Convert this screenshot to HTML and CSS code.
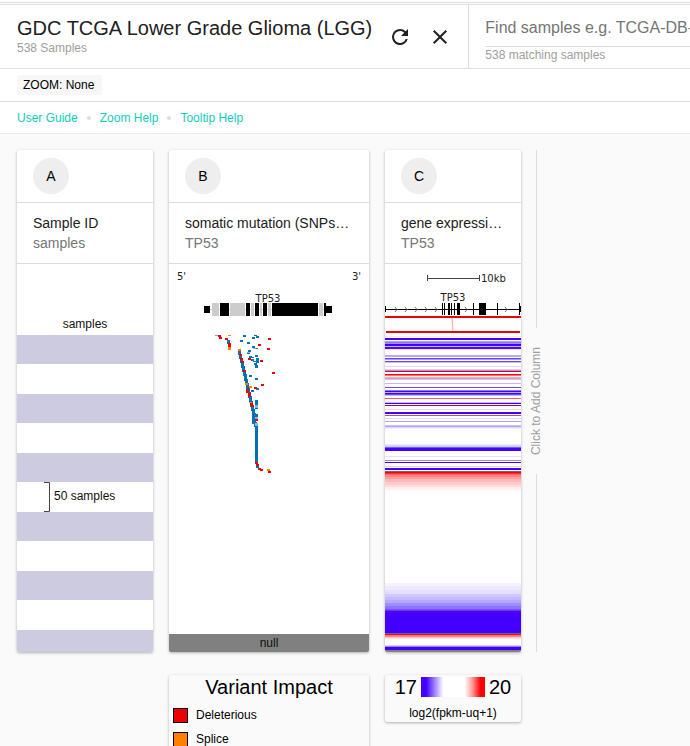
FILE: index.html
```html
<!DOCTYPE html>
<html lang="en">
<head>
<meta charset="utf-8">
<title>GDC TCGA Lower Grade Glioma (LGG)</title>
<link rel="stylesheet" href="styles.css">
</head>
<body>
<div class="topline"></div>
<header class="appbar">
  <div class="cohort">
    <div>
      <h1 class="cohort-name">GDC TCGA Lower Grade Glioma (LGG)</h1>
      <p class="note">538 Samples</p>
    </div>
    <div class="actions">
      <button class="icon-button" aria-label="Reload"><svg viewBox="0 0 24 24"><path d="M17.65 6.35A7.96 7.96 0 0 0 12 4a8 8 0 1 0 7.73 10h-2.08A6 6 0 1 1 12 6c1.66 0 3.14.69 4.22 1.78L13 11h7V4z"/></svg></button>
      <button class="icon-button" aria-label="Close"><svg viewBox="0 0 24 24"><path d="M19 6.41 17.59 5 12 10.59 6.41 5 5 6.41 10.59 12 5 17.59 6.41 19 12 13.41 17.59 19 19 17.59 13.41 12z"/></svg></button>
    </div>
  </div>
  <div class="search">
    <input class="search-box" type="text" aria-label="Find samples" placeholder="Find samples e.g. TCGA-DB-A4XH">
    <p class="note">538 matching samples</p>
  </div>
</header>
<div class="zoombar"><span class="chip">ZOOM: None</span></div>
<nav class="links">
  <a href="#guide">User Guide</a><i class="dot"></i><a href="#zoom">Zoom Help</a><i class="dot"></i><a href="#tooltip">Tooltip Help</a>
</nav>
<main class="columns">
  <section class="column narrow">
    <article class="card">
      <div class="card-top"><span class="badge">A</span></div>
      <div class="card-title"><h2>Sample ID</h2><p>samples</p></div>
      <svg class="plot" viewBox="0 0 136 388">
        <text class="label" x="68" y="64" text-anchor="middle">samples</text>
        <path class="band" d="M0 71h136v29H0zM0 130h136v29H0zM0 189h136v29H0zM0 248h136v29H0zM0 307h136v29H0zM0 366h136v22H0z"/>
        <path class="bracket" d="M27 218.500h5.500v29H27"/>
        <text class="label" x="37" y="236">50 samples</text>
      </svg>
    </article>
  </section>
  <section class="column wide">
    <article class="card">
      <div class="card-top"><span class="badge">B</span></div>
      <div class="card-title"><h2>somatic mutation (SNPs…</h2><p>TP53</p></div>
      <svg class="plot" viewBox="0 0 200 388">
        <text class="tiny" x="8" y="16">5'</text>
        <text class="tiny" x="183" y="16">3'</text>
        <text class="tiny" x="99" y="38" text-anchor="middle">TP53</text>
        <path class="intron" d="M41 45h116v1H41z"/>
        <path class="exon" d="M35 42h6v7h-6zM51 39h9v13h-9zM77 39h4v13h-4zM86 39h4v13h-4zM94 39h4v13h-4zM103 39h46v13h-46zM155 39h2v13h-2zM157 42h6v7h-6z"/>
        <path class="intron" d="M43 39h7v13h-7zM61 39h15v13H61zM82 39h3v13h-3zM91 39h2v13h-2zM99 39h3v13h-3zM150 39h4v13h-4z"/>
        <g id="mutations"></g>
        <path class="null-bar" d="M0 370h200v18H0z"/>
        <text class="label" x="100" y="383" text-anchor="middle">null</text>
      </svg>
    </article>
    <aside class="card legend impact">
      <h3>Variant Impact</h3>
      <ul>
        <li><i class="swatch deleterious"></i>Deleterious</li>
        <li><i class="swatch splice"></i>Splice</li>
      </ul>
    </aside>
  </section>
  <section class="column narrow">
    <article class="card">
      <div class="card-top"><span class="badge">C</span></div>
      <div class="card-title"><h2>gene expressi…</h2><p>TP53</p></div>
      <svg class="plot" viewBox="0 0 136 388">
        <path class="ruler" d="M42.500 11v6M42.500 14.500h52M94.500 11v6"/>
        <text class="tiny" x="96" y="18">10kb</text>
        <text class="tiny" x="68" y="37" text-anchor="middle">TP53</text>
        <path class="exon" d="M0 45h136v1H0zM0 42h1v6H0zM57 39h1v12h-1zM59 39h1v12h-1zM63 39h2v12h-2zM66 39h1v12h-1zM69 39h1v12h-1zM72 39h3v12h-3zM88 39h1v12h-1zM94 39h7v12h-7zM112 39h1v12h-1zM134 39h1v12h-1zM135 42h1v6h-1z"/>
        <path class="arrows" d="M10 43l2 2.500-2 2.500M20 43l2 2.500-2 2.500M30 43l2 2.500-2 2.500M40 43l2 2.500-2 2.500M50 43l2 2.500-2 2.500M80 43l2 2.500-2 2.500M120 43l2 2.500-2 2.500"/>
        <path class="probe" d="M0 52h136v2H0zM1 67h134v2H1z"/>
        <path class="probe-link" d="M67 54l1 13"/>
        <g id="expression"></g>
      </svg>
    </article>
    <aside class="card legend scale">
      <div class="scale-row"><span>17</span><i class="ramp"></i><span>20</span></div>
      <p>log2(fpkm-uq+1)</p>
    </aside>
  </section>
  <button class="add-column"><i></i><span>Click to Add Column</span><i></i></button>
</main>
<script src="plots.js"></script>
</body>
</html>
```
FILE: styles.css
```css
* { box-sizing: border-box; }
body { margin: 0; background: #fafafa; color: #212121; font-family: "Liberation Sans", Arial, sans-serif; font-size: 12px; line-height: 16px; overflow-x: hidden; }
h1, h2, h3, p, ul { margin: 0; padding: 0; font-weight: 400; list-style: none; }
button { border: 0; background: none; padding: 0; font: inherit; color: inherit; cursor: pointer; }
.topline { height: 5px; background: linear-gradient(#fff 2px, #ddd 2px, #ddd 3px, #fff 3px, #fff 4px, #ddd 4px); }
.appbar { display: flex; height: 64px; background: #fff; border-bottom: 1px solid #ddd; }
.cohort { display: flex; flex: none; gap: 16px; padding: 11px 16px 0 17px; border-right: 1px solid #ddd; }
.cohort-name { font-size: 20px; line-height: 24px; white-space: nowrap; }
.note { color: #9e9e9e; }
.actions { display: flex; gap: 16px; padding-top: 9px; }
.icon-button, .icon-button svg { display: block; width: 24px; height: 24px; fill: #212121; }
.search { flex: 1; min-width: 0; padding: 5px 0 0 16px; }
.search-box { display: block; width: 100%; height: 37px; padding: 0; border: 0; border-bottom: 1px solid #ddd; background: none; font: inherit; font-size: 16px; outline: 0; }
.search-box::placeholder { color: #757575; opacity: 1; }
.zoombar { height: 33px; padding: 6px 17px; background: #fff; border-bottom: 1px solid #ddd; }
.chip { display: inline-block; padding: 2px 8px 2px 6px; border-radius: 2px; background: #f7f7f7; color: #000; }
.links { display: flex; align-items: center; gap: 9px; height: 32px; padding: 0 17px; background: #fff; border-bottom: 1px solid #eee; }
.links a { color: #12cdbc; text-decoration: none; }
.dot { width: 4px; height: 4px; border-radius: 50%; background: #ddd; }
.columns { display: flex; align-items: flex-start; gap: 16px; padding: 16px 17px; }
.column { display: flex; flex: none; flex-direction: column; gap: 23px; }
.narrow { width: 136px; }
.wide { width: 200px; }
.card { background: #fff; border-radius: 2px; box-shadow: 0 1px 3px rgba(0, 0, 0, .3); overflow: hidden; }
.card-top { height: 53px; padding: 8px 16px; border-bottom: 1px solid #ddd; }
.badge { display: flex; align-items: center; justify-content: center; width: 36px; height: 36px; border-radius: 50%; background: #eee; color: #000; font-size: 14px; }
.card-title { height: 61px; padding: 10px 16px; border-bottom: 1px solid #ddd; font-size: 14px; line-height: 20px; }
.card-title h2 { font-size: 14px; overflow: hidden; white-space: nowrap; text-overflow: ellipsis; }
.card-title p { color: #757575; }
.plot { display: block; width: 100%; }
.label { font-size: 12px; fill: #111; }
.tiny { font-family: "DejaVu Sans", sans-serif; font-size: 10px; fill: #222; }
.band { fill: #cccbdf; }
.bracket, .ruler { fill: none; stroke: #444; }
.exon { fill: #000; shape-rendering: crispEdges; }
.intron { fill: #ccc; shape-rendering: crispEdges; }
.null-bar { fill: #808080; }
.arrows { fill: none; stroke: #777; }
.probe { fill: #ed0000; }
.probe-link { stroke: #ff9a9a; }
.legend { background: #fafafa; color: #000; }
.impact { height: 100px; }
.impact h3 { font-size: 20px; line-height: 24px; text-align: center; }
.impact ul { padding-top: 4px; }
.impact li { display: flex; align-items: center; gap: 8px; height: 24px; padding-left: 4px; }
.swatch { width: 15px; height: 15px; border: 1px solid #000; }
.deleterious { background: #ed0000; }
.splice { background: #ff7f00; }
.scale { height: 47px; text-align: center; }
.scale-row { display: flex; align-items: center; justify-content: center; gap: 4px; font-size: 20px; line-height: 24px; }
.scale p { padding-top: 6px; }
.ramp { width: 64px; height: 20px; background: linear-gradient(90deg, #40f 8%, #b6a4ff 25%, #fff 35%, #fff 68%, #ff9c9c 80%, #f00 93%); }
.add-column { display: flex; flex-direction: column; align-items: center; align-self: flex-start; gap: 19px; width: 16px; height: 502px; margin-left: -9px; color: #9e9e9e; }
.add-column i { flex: 1; width: 1px; background: #ddd; }
.add-column span { writing-mode: vertical-rl; transform: rotate(180deg); white-space: nowrap; }
```
FILE: plots.js
```js
const NS = 'http://www.w3.org/2000/svg';

function rect(parent, x, y, width, height, fill) {
  const node = document.createElementNS(NS, 'rect');
  const attrs = { x, y, width, height, fill, 'shape-rendering': 'crispEdges' };
  for (const name in attrs) node.setAttribute(name, attrs[name]);
  parent.appendChild(node);
}

// Mutation calls per impact colour: x, y, height
const calls = {
  '#a0a0a0': [[46, 71, 1]],
  '#0072b5': [
    [58, 76, 4], [74, 71, 2], [71, 76, 2], [78, 78, 2], [83, 73, 2], [85, 71, 1], [87, 72, 2],
    [83, 82, 2], [86, 84, 1], [79, 86, 2], [78, 89, 1], [80, 92, 2], [82, 93, 1], [82, 95, 2],
    [84, 97, 1], [86, 91, 2], [87, 94, 5], [85, 99, 2], [86, 101, 3], [80, 111, 2], [86, 114, 2],
    [87, 124, 2], [82, 126, 2], [86, 136, 7], [86, 144, 1], [86, 150, 3],
    [69, 87, 4], [70, 91, 4], [71, 94, 5], [72, 98, 6], [73, 102, 6], [74, 106, 6], [75, 110, 7],
    [76, 115, 6], [77, 119, 6], [78, 123, 6], [79, 128, 6], [80, 132, 7], [81, 137, 6],
    [82, 141, 6], [83, 145, 15], [84, 149, 11], [85, 158, 5], [86, 162, 37], [87, 201, 3]
  ],
  '#80b8da': [[84, 84, 1], [78, 88, 1], [86, 141, 3], [86, 153, 2], [86, 159, 3]],
  '#ed0000': [
    [49, 71, 2], [50, 73, 2], [56, 74, 2], [59, 79, 4], [99, 74, 2], [89, 80, 2], [98, 84, 2],
    [79, 94, 2], [91, 96, 2], [103, 108, 2], [92, 120, 2], [85, 123, 2], [86, 155, 2],
    [70, 90, 2], [71, 94, 2], [72, 97, 2], [74, 106, 2], [77, 125, 4], [79, 129, 4],
    [81, 139, 2], [82, 141, 2], [86, 198, 2], [87, 200, 2], [89, 204, 2], [91, 205, 2], [99, 207, 2]
  ],
  '#ff7f00': [[59, 71, 1], [59, 83, 3], [69, 85, 2], [76, 119, 2], [80, 122, 2], [80, 138, 1], [98, 205, 2]]
};
const mutations = document.getElementById('mutations');
for (const fill in calls) {
  calls[fill].forEach(([x, y, h]) => rect(mutations, x, y, 3, h, fill));
}

// Expression bands: y, height, colour
const bands = [
  [72, 1, '#fbe9f4'], [74, 2, '#4400ff'], [77, 1, '#b0a2fa'], [78, 1, '#8874f4'], [79, 1, '#a090f8'],
  [80, 2, '#4400ff'], [82, 1, '#c8beff'], [83, 2, '#4a08f0'], [85, 1, '#fbdcf0'],
  [91, 2, '#b8a8ff'], [94, 1, '#6644ff'], [95, 1, '#a898ff'], [97, 1, '#6644ff'], [98, 1, '#c4b8ff'],
  [102, 1, '#dcd4ff'], [105, 1, '#d8d0ff'], [106, 1, '#a490e8'], [107, 1, '#e00028'],
  [110, 1, '#ff0000'], [111, 1, '#ff7070'], [113, 1, '#ffa8b0'], [114, 1, '#b8a8f4'], [115, 1, '#ffb4bc'],
  [119, 1, '#c4b8ff'], [123, 1, '#6a4cff'], [126, 1, '#8878f4'], [127, 1, '#4400ff'], [128, 1, '#b8acff'],
  [129, 1, '#4400ff'], [130, 1, '#6644ff'], [131, 1, '#c4b8ff'], [134, 1, '#ff5868'],
  [138, 1, '#c4b8ff'], [139, 1, '#4400ff'], [141, 1, '#a00098'], [145, 1, '#ffd0d0'],
  [148, 2, '#4400ff'], [151, 1, '#a050c0'], [154, 1, '#e0d8ff'], [157, 1, '#b0a0ff'],
  [161, 1, '#ccc0ff'], [162, 1, '#b0a0ff'], [163, 1, '#e0d8ff'], [164, 1, '#f4f0ff'],
  [180, 1, '#f0ecff'], [181, 1, '#dcd8f4'], [182, 1, '#ccc8f0'], [183, 1, '#7060f0'], [184, 3, '#4400ff'],
  [192, 1, '#e8e0ff'], [196, 1, '#9c8cff'], [198, 1, '#4400ff'], [202, 1, '#d8d0ff'],
  [204, 2, '#4400ff'], [207, 1, '#6464a0'], [208, 1, '#ff0000'], [209, 1, '#ff3030'],
  [210, 1, '#ff6464'], [211, 2, '#ff8484'], [213, 2, '#ffa0a0'], [215, 3, '#ffb8b8'],
  [218, 3, '#ffcccc'], [221, 2, '#ffdcdc'], [223, 2, '#ffecec'], [225, 2, '#fff8f8'],
  [319, 3, '#f6f3ff'], [322, 4, '#eee9ff'], [326, 4, '#e4deff'], [330, 3, '#d0c8ff'],
  [333, 3, '#c4baff'], [336, 3, '#b4a8ff'], [339, 3, '#a08eff'], [342, 3, '#8c74ff'],
  [345, 1, '#7454fc'], [346, 1, '#6036f8'], [347, 2, '#5600ec'], [349, 20, '#4400ff'],
  [369, 1, '#6464a0'], [370, 1, '#ff0000'], [371, 2, '#ff8080'], [373, 1, '#ffc8c8'],
  [374, 1, '#ffe4e4'], [381, 1, '#d8d0ff'], [382, 1, '#9488f0'], [383, 3, '#4400ff'], [386, 2, '#808080']
];
const expression = document.getElementById('expression');
bands.forEach(([y, h, fill]) => rect(expression, 0, y, 136, h, fill));
```
